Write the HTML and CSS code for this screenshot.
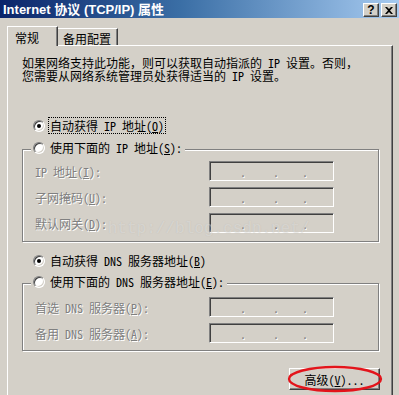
FILE: index.html
```html
<!DOCTYPE html>
<html lang="zh-CN">
<head>
<meta charset="utf-8">
<title>Internet 协议 (TCP/IP) 属性</title>
<link rel="stylesheet" href="styles.css">
</head>
<body>
<div class="titlebar">
  <span class="title">Internet 协议 (TCP/IP) 属性</span>
  <div class="caption-btns">
    <span class="cbtn cbtn--help">?</span>
    <span class="cbtn"><svg width="8" height="7" viewBox="0 0 8 7"><path d="M0 0h2l2 2 2-2h2L5 3.5 8 7H6L4 5 2 7H0l3-3.5z" fill="#000"/></svg></span>
  </div>
</div>
<div class="tabs">
  <div class="tab tab--active">常规</div>
  <div class="tab">备用配置</div>
</div>
<div class="panel">
  <p class="desc">如果网络支持此功能，则可以获取自动指派的 IP 设置。否则，<br>您需要从网络系统管理员处获得适当的 IP 设置。</p>

  <div class="opt opt--ip"><span class="radio radio--on"></span><span class="lbl lbl--focus">自动获得 IP 地址(<u>O</u>)</span></div>
  <div class="group group--ip">
    <div class="legend"><span class="radio"></span><span class="lbl">使用下面的 IP 地址(<u>S</u>):</span></div>
    <div class="fields">
      <span class="flabel">IP 地址(<u>I</u>):</span>
      <div class="ipbox"><span class="dot d1">.</span><span class="dot d2">.</span><span class="dot d3">.</span></div>
      <span class="flabel">子网掩码(<u>U</u>):</span>
      <div class="ipbox"><span class="dot d1">.</span><span class="dot d2">.</span><span class="dot d3">.</span></div>
      <span class="flabel">默认网关(<u>D</u>):</span>
      <div class="ipbox"><span class="dot d1">.</span><span class="dot d2">.</span><span class="dot d3">.</span></div>
    </div>
  </div>

  <div class="opt opt--dns"><span class="radio radio--on"></span><span class="lbl">自动获得 DNS 服务器地址(<u>B</u>)</span></div>
  <div class="group group--dns">
    <div class="legend"><span class="radio"></span><span class="lbl">使用下面的 DNS 服务器地址(<u>E</u>):</span></div>
    <div class="fields">
      <span class="flabel">首选 DNS 服务器(<u>P</u>):</span>
      <div class="ipbox"><span class="dot d1">.</span><span class="dot d2">.</span><span class="dot d3">.</span></div>
      <span class="flabel">备用 DNS 服务器(<u>A</u>):</span>
      <div class="ipbox"><span class="dot d1">.</span><span class="dot d2">.</span><span class="dot d3">.</span></div>
    </div>
  </div>

  <div class="actions">
    <button class="btn" type="button">高级(<u>V</u>)...<svg class="mark" width="96" height="28" viewBox="0 0 96 28"><ellipse cx="48" cy="14" rx="46" ry="12" fill="none" stroke="#e3141b" stroke-width="2.4"/></svg></button>
  </div>
</div>
<div class="watermark">http://blog.csdn.net/</div>
</body>
</html>
```

FILE: styles.css
```css
* { box-sizing: border-box; }
html, body { margin: 0; }
body {
  position: relative;
  width: 399px;
  height: 395px;
  overflow: hidden;
  background: #d4d0c8;
  color: #000;
  font-family: "Noto Sans Mono CJK SC", "Noto Sans CJK SC", sans-serif;
  font-size: 12px;
  line-height: 13px;
}

/* title bar */
.titlebar {
  height: 18px;
  display: flex;
  justify-content: space-between;
  padding: 0 2px 0 3px;
  background: linear-gradient(to right, #0a246a 0%, #3a6ea5 45%, #a6caf0 100%);
}
.title {
  color: #fff;
  font-family: "Liberation Sans", "Noto Sans CJK SC", sans-serif;
  font-weight: bold;
  font-size: 13px;
  line-height: 19px;
  white-space: nowrap;
}
.caption-btns {
  display: flex;
  gap: 2px;
  margin-top: 3px;
}
.cbtn {
  width: 16px;
  height: 14px;
  display: flex;
  align-items: center;
  justify-content: center;
  background: #d4d0c8;
  border: 1px solid;
  border-color: #fff #404040 #404040 #fff;
  box-shadow: inset -1px -1px 0 #808080;
}
.cbtn--help {
  font-family: "Liberation Sans", sans-serif;
  font-weight: bold;
  font-size: 12px;
  line-height: 12px;
}

/* tabs */
.tabs {
  display: flex;
  align-items: flex-end;
  height: 19px;
  margin: 8px 0 0 7px;
}
.tab {
  width: 60px;
  height: 17px;
  padding: 3px 0 0 5px;
  border-top: 1px solid #fff;
  border-right: 1px solid #404040;
  box-shadow: inset -1px 0 0 #808080;
  white-space: nowrap;
}
.tab--active {
  position: relative;
  z-index: 1;
  width: 51px;
  height: 20px;
  margin-bottom: -1px;
  padding: 4px 0 0 7px;
  border-left: 1px solid #fff;
  background: #d4d0c8;
}

/* panel */
.panel {
  width: 386px;
  height: 350px;
  margin-left: 7px;
  padding: 10px 13px 0 14px;
  border: 1px solid;
  border-color: #fff #404040 transparent #fff;
  border-bottom: 0;
  box-shadow: inset -1px 0 0 #808080;
}
.desc {
  margin: 0;
  white-space: nowrap;
}

/* radio options */
.opt {
  display: flex;
  align-items: center;
  gap: 4px;
  height: 15px;
  padding-left: 11px;
}
.opt--ip { margin-top: 36px; }
.opt--dns { margin-top: 11px; }
.radio {
  position: relative;
  flex: none;
  width: 12px;
  height: 12px;
  border-radius: 50%;
  background: #fff;
  border: 1px solid;
  border-color: #808080 #fff #fff #808080;
  box-shadow: inset 1px 1px 0 #404040, inset -1px -1px 0 #d4d0c8;
}
.radio--on::after {
  content: "";
  position: absolute;
  left: 3px;
  top: 3px;
  width: 4px;
  height: 4px;
  border-radius: 50%;
  background: #000;
}
.lbl {
  display: block;
  padding: 1px;
  white-space: nowrap;
}
.lbl--focus {
  outline: 1px dotted #000;
  outline-offset: 0;
}
u { text-decoration: underline; text-underline-offset: 1px; }

/* group boxes */
.group {
  border: 1px solid #808080;
  box-shadow: inset 1px 1px 0 #fff, 1px 1px 0 #fff;
  padding-bottom: 7px;
}
.group--ip { margin-top: 16px; padding-bottom: 8px; }
.group--dns { margin-top: 15px; }
.legend {
  display: flex;
  align-items: center;
  gap: 4px;
  width: max-content;
  height: 13px;
  margin: -9px 0 0 8px;
  padding: 0 2px;
  background: #d4d0c8;
}
.legend .lbl { padding: 0 1px; }

.fields {
  display: grid;
  grid-template-columns: 174px 125px;
  grid-auto-rows: 20px;
  row-gap: 6px;
  align-items: center;
  margin: 7px 0 0 12px;
}
.group--dns .fields { margin-top: 9px; }
.flabel {
  color: #808080;
  text-shadow: 1px 1px 0 #fff;
  white-space: nowrap;
}
.ipbox {
  height: 20px;
  display: flex;
  align-items: center;
  border: 1px solid;
  border-color: #808080 #fff #fff #808080;
  box-shadow: inset 1px 1px 0 #404040, inset -1px -1px 0 #d4d0c8;
}
.dot {
  width: 6px;
  text-align: center;
  color: #808080;
  text-shadow: 1px 1px 0 #fff;
}
.d1 { margin-left: 30px; }
.d2 { margin-left: 27px; }
.d3 { margin-left: 23px; }

/* button */
.actions {
  display: flex;
  justify-content: flex-end;
  margin: 17px -1px 0 0;
}
.btn {
  position: relative;
  width: 91px;
  height: 22px;
  padding: 0;
  font: inherit;
  color: #000;
  background: #d4d0c8;
  border: 1px solid;
  border-color: #fff #404040 #404040 #fff;
  box-shadow: inset -1px -1px 0 #808080;
  white-space: nowrap;
}
.mark {
  position: absolute;
  left: -3px;
  top: -4px;
  pointer-events: none;
}

.watermark {
  position: absolute;
  left: 108px;
  top: 219px;
  font-family: "Liberation Mono", monospace;
  font-size: 16px;
  line-height: 20px;
  color: rgba(255, 255, 255, 0.35);
  text-shadow: 0 0 1px rgba(150, 145, 140, 0.35);
  pointer-events: none;
}
```
